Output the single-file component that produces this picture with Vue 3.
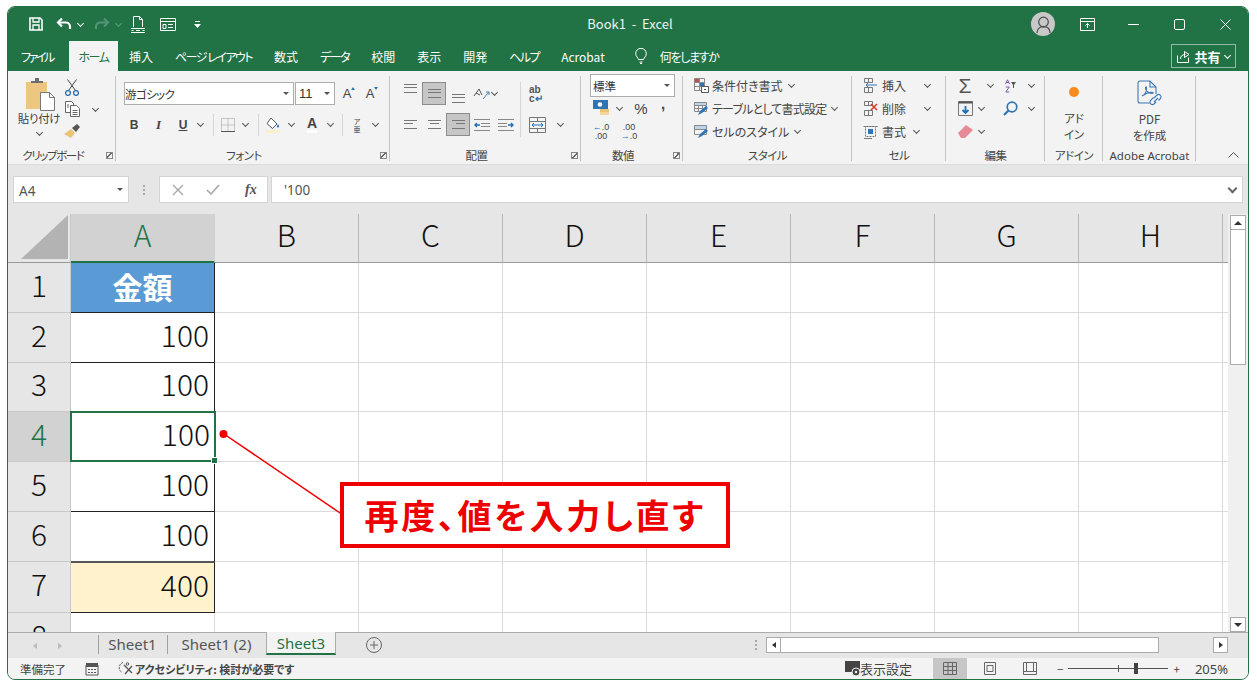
<script setup>
const menuTabs = [
  { label: "挿入" },
  { label: "ページ レイアウト", kana: true },
  { label: "数式" },
  { label: "データ", kana: true },
  { label: "校閲" },
  { label: "表示" },
  { label: "開発" },
  { label: "ヘルプ", kana: true },
  { label: "Acrobat" },
];
const columns = ["A", "B", "C", "D", "E", "F", "G", "H"];
const rows = [
  { no: 1, value: "金額", kind: "head" },
  { no: 2, value: "100", kind: "num" },
  { no: 3, value: "100", kind: "num" },
  { no: 4, value: "100", kind: "sel" },
  { no: 5, value: "100", kind: "num" },
  { no: 6, value: "100", kind: "num" },
  { no: 7, value: "400", kind: "total" },
  { no: 8, value: "", kind: "" },
];
</script>

<template>
  <div class="page">
    <div class="window">
      <!-- title bar -->
      <div class="titlebar">
        <div class="qat">
          <svg class="q-save" width="14" height="14" viewBox="0 0 14 14" fill="none" stroke="#fff" stroke-width="1.6"><path d="M1 1h10l2 2v10H1z" /><path d="M4 1v4h6V1M4 13V8h6v5" stroke-width="1.3" /></svg>
          <svg class="q-undo" width="17" height="14" viewBox="0 0 17 14" fill="none" stroke="#fff" stroke-width="2.2"><path d="M6 1.5 2 5.5l4 4" /><path d="M2.5 5.5H10a4 4 0 0 1 4 4V12" /></svg>
          <i class="chev white q-c1"></i>
          <svg class="q-redo" width="17" height="14" viewBox="0 0 17 14" fill="none" stroke="#55957a" stroke-width="2"><path d="m11 1.5 4 4-4 4" /><path d="M14.5 5.5H7a4 4 0 0 0-4 4V12" /></svg>
          <i class="chev faded q-c2"></i>
          <svg class="q-new" width="14" height="17" viewBox="0 0 14 17" fill="none" stroke="#fff"><path d="M2.5 11V.5h6l3 3V11M8.500.5v3h3" /><path d="M.5 14.5h2M5 14.5h4M11.5 14.5h2M0 12.5h14M0 16.5h14" stroke-width="1" /></svg>
          <svg class="q-form" width="16" height="13" viewBox="0 0 16 13" fill="none" stroke="#fff"><path d="M.5.5h15v12H.5zM.5 3.5h15M3 6.5h3v4H3zM8 6.5h5M8 9.5h5" /></svg>
          <svg class="q-more" width="7" height="7" viewBox="0 0 7 7" fill="#fff"><path d="M1 0h5v1H1zM0 3h7L3.5 7z" /></svg>
        </div>
        <div class="doc-title">Book1 &nbsp;-&nbsp; Excel</div>
        <div class="win-btns">
          <span class="avatar">
            <svg width="15" height="18" viewBox="0 0 15 18" fill="none" stroke="#4a4a4a" stroke-width="1.2"><circle cx="7.5" cy="6" r="4.8" /><path d="M1 17c0-4 2.5-6.3 6.5-6.3S14 13 14 17" /></svg>
          </span>
          <svg class="w-disp" width="15" height="13" viewBox="0 0 15 13" fill="none" stroke="#fff"><path d="M.5.5h14v12H.5zM.5 3.5h14" /><path d="M7.5 10V5.5M5.5 7.5l2-2 2 2" /></svg>
          <svg class="w-min" width="11" height="1" viewBox="0 0 11 1"><path d="M0 0h11v1H0z" fill="#fff" /></svg>
          <svg class="w-max" width="11" height="11" viewBox="0 0 11 11" fill="none" stroke="#fff"><rect x=".5" y=".5" width="10" height="10" rx="1.5" /></svg>
          <svg class="w-close" width="11" height="11" viewBox="0 0 11 11" fill="none" stroke="#fff"><path d="m.5.5 10 10M10.5.5l-10 10" /></svg>
        </div>
      </div>

      <!-- menu tabs -->
      <div class="menubar">
        <span class="menu-item file">ファイル</span>
        <span class="menu-item active kana">ホーム</span>
        <span
          v-for="t in menuTabs"
          :key="t.label"
          class="menu-item"
          :class="{ kana: t.kana }"
        >{{ t.label }}</span>
        <svg class="bulb" width="12" height="16" viewBox="0 0 12 16" fill="none" stroke="#fff"><path d="M3.5 11.5C3 9.5.7 8.5.7 5.6a5.3 5.3 0 0 1 10.6 0c0 2.9-2.3 3.9-2.8 5.9zM4.5 14h3M5 15.5h2" /></svg>
        <span class="tell">何をしますか</span>
        <span class="share">
          <svg width="13" height="13" viewBox="0 0 13 13" fill="none" stroke="#fff"><path d="M.5 5.5v7h11v-5M3.5 9c0-3 2-4.500 5-4.500M7.5 1.5l4.500 3-4.500 3z" /></svg>
          <b>共有</b><i class="chev white"></i>
        </span>
      </div>

      <!-- ribbon -->
      <div class="ribbon">
        <div class="group g-clip">
          <div class="group-body clip-body">
            <div class="paste">
              <svg class="paste-icon" width="30" height="33" viewBox="0 0 30 33"><rect x="0" y="4" width="21" height="27" fill="#edc77f" /><path d="M5 5V3h4V0h4v3h4v2z" fill="#6e6e6e" /><path d="M14.5 14.5h9l5 5v13h-14z" fill="#fff" stroke="#777" /><path d="M23.5 14.5v5h5" fill="none" stroke="#777" /></svg>
              <span class="paste-label">貼り付け</span>
              <i class="chev"></i>
            </div>
            <div class="clip-tools">
              <svg width="14" height="17" viewBox="0 0 14 17" fill="none" stroke="#444"><path d="m2.5.5 8 11M11.5.5l-8 11" /><circle cx="3" cy="14" r="2.4" stroke="#2b6cb0" stroke-width="1.3" /><circle cx="11" cy="14" r="2.4" stroke="#2b6cb0" stroke-width="1.3" /></svg>
              <span></span>
              <svg width="15" height="16" viewBox="0 0 15 16" fill="#fff" stroke="#666"><path d="M.5.5h6l2 2v9h-8z" /><path d="M5.5 4.5h6l3 3v8h-9z" /><path d="M7.5 9.5h5M7.5 11.5h5M7.5 13.5h5M2 4h2M2 6h2" fill="none" /></svg>
              <i class="chev"></i>
              <svg width="16" height="14" viewBox="0 0 16 14"><path d="M0 10 7 5l4 4-4 5z" fill="#e9c477" /><path d="m8 4 5-4 3 3-4 5z" fill="#555" /></svg>
            </div>
          </div>
          <div class="group-label shift tight">クリップボード</div>
          <i class="launcher"></i>
        </div>

        <div class="group g-font">
          <div class="group-body font-body">
            <div class="font-row1">
              <div class="select font-name">游ゴシック<i class="tri"></i></div>
              <div class="select font-size">11<i class="tri"></i></div>
              <span class="grow">A<i class="up"></i></span>
              <span class="shrink">A<i class="down"></i></span>
            </div>
            <div class="font-row2">
              <b class="fmt sans">B</b>
              <b class="fmt italic">I</b>
              <b class="fmt underline sans">U</b>
              <i class="chev"></i>
              <i class="vbar"></i>
              <svg width="14" height="14" viewBox="0 0 14 14" fill="none" stroke="#9a9a9a"><path d="M.5.5h13v13H.5zM7 .5v13M.5 7h13" stroke-dasharray="1 1" /><path d="M0 13.5h14" stroke="#555" /></svg>
              <i class="chev"></i>
              <i class="vbar"></i>
              <svg width="17" height="17" viewBox="0 0 17 17"><path d="m6 2 6 6-4.5 4.5L2 7.5z" fill="#fff" stroke="#555" /><path d="M13 8c1.5 2 1.5 3.5 0 3.5S11.5 10 13 8z" fill="#2f7ec1" /><path d="M1 14h14v3H1z" fill="#fbeecb" /></svg>
              <i class="chev"></i>
              <span class="font-color">A</span>
              <i class="chev"></i>
              <i class="vbar"></i>
              <span class="ruby">ア<br />亜</span>
              <i class="chev"></i>
            </div>
          </div>
          <div class="group-label shift">フォント</div>
          <i class="launcher"></i>
        </div>

        <div class="group g-align">
          <div class="group-body align-body">
            <div class="align-grid">
              <span class="al"><i class="lines top"></i></span>
              <span class="al on"><i class="lines"></i></span>
              <span class="al"><i class="lines bottom"></i></span>
              <span class="al orient">
                <svg width="18" height="15" viewBox="0 0 18 15" fill="none" stroke="#555"><path d="m1 10 5-7 3 6M3 7l4 2" /><path d="M10 13 16 6M13 6h3v3" stroke="#4a7ebb" /></svg>
                <i class="chev abs-chev"></i>
              </span>
              <span class="al"></span>
              <span class="al"><i class="lines left"></i></span>
              <span class="al"><i class="lines center"></i></span>
              <span class="al on"><i class="lines right"></i></span>
              <span class="al">
                <svg width="16" height="12" viewBox="0 0 16 12" fill="none" stroke="#888"><path d="M0 .5h16M7 4.5h9M7 7.5h9M0 11.5h16" /><path d="M6 6H1M3 4 1 6l2 2" stroke="#1e6fb8" stroke-width="1.4" /></svg>
              </span>
              <span class="al">
                <svg width="16" height="12" viewBox="0 0 16 12" fill="none" stroke="#888"><path d="M0 .5h16M0 4.5h9M0 7.5h9M0 11.5h16" /><path d="M10 6h5M13 4l2 2-2 2" stroke="#1e6fb8" stroke-width="1.4" /></svg>
              </span>
            </div>
            <i class="vbar tall"></i>
            <div class="wrap-col">
              <div class="wrap-row">
                <span class="wrap-icon">ab<br />c<em>↵</em></span>
              </div>
              <div class="wrap-row">
                <svg width="17" height="16" viewBox="0 0 17 16" fill="none" stroke="#777"><path d="M.5.5h16v15H.5zM.5 4.5h16M.5 11.5h16M8.5.5v4M8.5 11.5v4" /><path d="M3 8h11M5 6 3 8l2 2M12 6l2 2-2 2" stroke="#1e6fb8" /></svg>
                <i class="chev merge-chev"></i>
              </div>
            </div>
          </div>
          <div class="group-label shift">配置</div>
          <i class="launcher"></i>
        </div>

        <div class="group g-num">
          <div class="group-body num-body">
            <div class="select num-format">標準<i class="tri"></i></div>
            <div class="num-row2">
              <svg width="17" height="17" viewBox="0 0 17 17"><rect x="0" y="0" width="15" height="9" fill="#2f75b5" /><circle cx="7" cy="4.5" r="2.3" fill="#fff" /><rect x="7" y="9" width="9" height="3" fill="#e9c477" /><rect x="7" y="12" width="9" height="3" fill="#f2d59b" /></svg>
              <i class="chev"></i>
              <span class="pct">%</span>
              <span class="comma">,</span>
            </div>
            <div class="num-row3">
              <span class="dec"><em>←</em>.0<br />.00</span>
              <span class="dec">.00<br /><em>→</em>.0</span>
            </div>
          </div>
          <div class="group-label shift">数値</div>
          <i class="launcher"></i>
        </div>

        <div class="group g-style">
          <div class="group-body list-body">
            <div class="list-row">
              <svg width="15" height="15" viewBox="0 0 15 15" fill="none" stroke="#8a8a8a"><path d="M.5.5h10v12H.5zM.5 4.5h10M.5 8.5h10M5.5.5v12" /><path d="M1 1h4v3H1z" fill="#c0504d" stroke="none" /><path d="M6 5h4v3H6z" fill="#2f75b5" stroke="none" /><path d="M7.5 8.5h7v6h-7z" fill="#fff" stroke="#555" /><path d="M10 11.5h2" stroke="#555" /></svg>
              <span>条件付き書式</span><i class="chev"></i>
            </div>
            <div class="list-row">
              <svg width="15" height="15" viewBox="0 0 15 15" fill="none" stroke="#8a8a8a"><path d="M.5 1.5h12v9H.5zM.5 4.5h12M.5 7.5h12M4.5 1.5v9M8.5 1.5v9" /><path d="M.5 1.5h12v3H.5z" fill="#bcd3ea" /><path d="m4 14 2-4 6-5 2 2-6 5z" fill="#2f75b5" stroke="none" /></svg>
              <span class="table-label">テーブルとして書式設定</span><i class="chev"></i>
            </div>
            <div class="list-row">
              <svg width="15" height="15" viewBox="0 0 15 15" fill="none" stroke="#8a8a8a"><path d="M.5 1.5h12v9H.5z" /><path d="M.5 1.5h12v4H.5z" fill="#bcd3ea" /><path d="m4 14 2-4 6-5 2 2-6 5z" fill="#2f75b5" stroke="none" /></svg>
              <span>セルのスタイル</span><i class="chev"></i>
            </div>
          </div>
          <div class="group-label">スタイル</div>
        </div>

        <div class="group g-cell">
          <div class="group-body list-body">
            <div class="list-row">
              <svg width="15" height="15" viewBox="0 0 15 15" fill="none" stroke="#777"><path d="M1.5.5h8v4h-8zM1.5 9.5h8v5h-8zM5.5.5v4M5.5 9.5v5" /><path d="M14 7H3M5 5 3 7l2 2" stroke="#2f75b5" /></svg>
              <span class="cell-text">挿入</span><i class="chev"></i>
            </div>
            <div class="list-row">
              <svg width="15" height="15" viewBox="0 0 15 15" fill="none" stroke="#777"><path d="M1.5.5h8v4h-8zM1.5 9.5h8v5h-8zM5.5.5v4M5.5 9.5v5" /><path d="m8 3 6 6M14 3 8 9" stroke="#d83b30" stroke-width="1.6" /></svg>
              <span class="cell-text">削除</span><i class="chev"></i>
            </div>
            <div class="list-row">
              <svg width="15" height="15" viewBox="0 0 15 15" fill="none" stroke="#777"><path d="M.5 2.5h14M2.5 2.5h10v10h-10z" stroke-dasharray="2 1" /><path d="M5 5h5v5H5z" fill="#2f75b5" stroke="none" /><path d="M1 14.5h8" /></svg>
              <span class="cell-text">書式</span><i class="chev near"></i>
            </div>
          </div>
          <div class="group-label">セル</div>
        </div>

        <div class="group g-edit">
          <div class="group-body edit-body">
            <span class="sigma">Σ</span><i class="chev"></i>
            <svg width="11" height="14" viewBox="0 0 11 14" fill="none" stroke="#7a5ca8"><path d="M.5 5 2.5.8 4.5 5M1 3.5h3M.8 8h3.5L.8 13h3.5" /><path d="M6 3h5L9 6v3H8V6z" fill="#555" stroke="none" /></svg>
            <i class="chev"></i>
            <svg width="15" height="15" viewBox="0 0 15 15" fill="none" stroke="#777"><path d="M.5.5h14v14H.5z" /><path d="M.5.5h14v2H.5z" fill="#555" stroke="none" /><path d="M7.5 5v7M4.5 9l3 3 3-3" stroke="#1e6fb8" stroke-width="1.8" /></svg>
            <i class="chev c-near"></i>
            <svg width="15" height="15" viewBox="0 0 15 15" fill="none" stroke="#2f75b5" stroke-width="1.7"><circle cx="9" cy="6" r="4.8" /><path d="M5.5 9.5 1 14" stroke-width="2.2" /></svg>
            <i class="chev"></i>
            <svg width="15" height="13" viewBox="0 0 15 13"><path d="m0 8 8-8 7 5-8 8H3z" fill="#e58a96" /></svg>
            <i class="chev c-near"></i>
          </div>
          <div class="group-label">編集</div>
        </div>

        <div class="group g-addin">
          <div class="group-body big-body">
            <i class="orange-dot"></i>
            <span class="big-label">アド<br />イン</span>
          </div>
          <div class="group-label">アドイン</div>
        </div>

        <div class="group g-acro">
          <div class="group-body big-body">
            <svg class="pdf" width="26" height="27" viewBox="0 0 26 27" fill="none" stroke="#3e77b8" stroke-width="1.1"><path d="M13 23H3a2 2 0 0 1-2-2V3a2 2 0 0 1 2-2h10l6 6v7" /><path d="M13 1v6h6" /><path d="M5 16c3-1 5-5 4.5-8.5-.2-1-1.3-.8-1 .8.5 2.5 3.5 5.5 7 5 1-.2.8-1-.5-1-3 0-7 1.5-10 3.7z" /><path d="m17 18 3-3a2.5 2.5 0 0 1 3.5 3.5l-2 2M19 22l-2 2a2.5 2.5 0 0 1-3.5-3.5l3-3M17 22l4-4" /></svg>
            <span class="big-label pdf-label">PDF<br />を作成</span>
          </div>
          <div class="group-label acro-label">Adobe Acrobat</div>
        </div>

        <svg class="collapse" width="11" height="6" viewBox="0 0 11 6" fill="none" stroke="#555"><path d="m.5 5.5 5-5 5 5" /></svg>
      </div>

      <!-- formula bar -->
      <div class="formula">
        <div class="name-box">A4<i class="tri"></i></div>
        <div class="dots"><i></i><i></i><i></i></div>
        <div class="fx-box">
          <svg width="12" height="12" viewBox="0 0 12 12" fill="none" stroke="#a5a5a5" stroke-width="1.3"><path d="m1 1 10 10M11 1 1 11" /></svg>
          <svg width="14" height="11" viewBox="0 0 14 11" fill="none" stroke="#a5a5a5" stroke-width="1.5"><path d="m1 6 4 4 8-9" /></svg>
          <span class="fx">fx</span>
        </div>
        <div class="formula-input">'100<i class="chev big"></i></div>
      </div>

      <!-- sheet -->
      <div class="sheet">
        <div class="grid">
          <div class="corner">
            <svg width="47" height="44" viewBox="0 0 47 44"><path d="M47 0v44H0z" fill="#b3b3b3" /></svg>
          </div>
          <div
            v-for="c in columns"
            :key="c"
            class="col-head"
            :class="{ current: c === 'A' }"
          >{{ c }}</div>
          <div class="col-rest"></div>

          <template v-for="r in rows" :key="r.no">
            <div class="row-head" :class="{ current: r.no === 4 }">{{ r.no }}</div>
            <div class="cell cell-a" :class="r.kind">
              {{ r.value }}
              <i v-if="r.kind === 'sel'" class="handle"></i>
            </div>
            <div v-for="c in columns.slice(1)" :key="c" class="cell"></div>
            <div class="cell rest"></div>
          </template>
        </div>
        <div class="vscroll">
          <div class="sb-btn"><i class="tri-up"></i></div>
          <div class="v-thumb"></div>
          <div class="v-track"></div>
          <div class="sb-btn"><i class="tri-down"></i></div>
        </div>
      </div>

      <!-- sheet tabs -->
      <div class="tabbar">
        <div class="nav">
          <i class="nav-l"></i>
          <i class="nav-r"></i>
        </div>
        <div class="sheet-tab first">Sheet1</div>
        <div class="sheet-tab second">Sheet1 (2)</div>
        <div class="sheet-tab active">Sheet3</div>
        <svg class="add" width="16" height="16" viewBox="0 0 16 16" fill="none" stroke="#666"><circle cx="8" cy="8" r="7.5" /><path d="M8 4v8M4 8h8" /></svg>
        <div class="dots small"><i></i><i></i><i></i></div>
        <div class="hscroll">
          <div class="sb-btn wide"><i class="tri-left"></i></div>
          <div class="h-thumb"></div>
          <div class="sb-btn wide"><i class="tri-right"></i></div>
        </div>
      </div>

      <!-- status bar -->
      <div class="status">
        <span class="ready">準備完了</span>
        <svg class="st-macro" width="14" height="14" viewBox="0 0 14 14" fill="#555"><path d="M1 3h12v10H1z" fill="none" stroke="#555" /><path d="M1 1h12v4H1zM3 7h2v1H3zM6 7h2v1H6zM9 7h2v1H9zM3 10h2v1H3zM6 10h2v1H6zM9 10h2v1H9z" /></svg>
        <svg class="st-access" width="15" height="15" viewBox="0 0 15 15" fill="none" stroke="#555"><path d="M5 1.5a5.5 5.5 0 0 0-1 10" stroke-dasharray="2 1" /><path d="m6 4 8 8M14 5 7 13" stroke-width="1.3" /><circle cx="9.5" cy="3" r="1.3" /></svg>
        <b class="access">アクセシビリティ: 検討が必要です</b>
        <span class="st-right">
          <svg class="st-view" width="16" height="15" viewBox="0 0 16 15"><path d="M0 0h15v11H0z" fill="#444" /><circle cx="11" cy="11" r="4" fill="#444" stroke="#f3f3f3" /><circle cx="11" cy="11" r="1.2" fill="#f3f3f3" /></svg>
          <span class="view-label">表示設定</span>
          <span class="view on">
            <svg width="14" height="13" viewBox="0 0 14 13" fill="none" stroke="#666"><path d="M.5.5h13v12H.5zM.5 4.5h13M.5 8.5h13M5 .5v12M9.5.5v12" /></svg>
          </span>
          <span class="view">
            <svg width="12" height="13" viewBox="0 0 12 13" fill="none" stroke="#666"><path d="M.5.5h11v12H.5zM3 3.5h6v6H3z" /></svg>
          </span>
          <span class="view">
            <svg width="14" height="13" viewBox="0 0 14 13" fill="none" stroke="#666"><path d="M.5.5h13v12H.5zM.5 9.5h3M10.5 9.5h3M3.5.5v9h7V.5" /></svg>
          </span>
          <span class="zoom-minus">−</span>
          <span class="slider"><i class="tick"></i><i class="thumb"></i></span>
          <span class="zoom-plus">+</span>
          <span class="zoom-val">205%</span>
        </span>
      </div>
    </div>

    <!-- annotation on top of the sheet -->
    <svg class="arrow" width="1257" height="688" viewBox="0 0 1257 688">
      <circle cx="223.5" cy="434" r="4" fill="#ee0000" />
      <path d="M224 434 343 515" stroke="#ee0000" stroke-width="1.5" fill="none" />
    </svg>
    <div class="callout">再度、値を入力し直す</div>
  </div>
</template>

<style>
html,
body {
  margin: 0;
  background: #fff;
}
</style>

<style scoped>
.page {
  position: relative;
  width: 1257px;
  height: 688px;
  overflow: hidden;
  background: #fff;
  padding: 6px 0 0 7px;
  box-sizing: border-box;
  font-family: "Noto Sans CJK JP", "Noto Sans", sans-serif;
  font-feature-settings: "palt";
  color: #444;
}

i {
  font-style: normal;
}

.window {
  width: 1242px;
  height: 674px;
  box-sizing: border-box;
  border: 1px solid #217346;
  border-radius: 8px;
  overflow: hidden;
  display: flex;
  flex-direction: column;
  background: #e6e6e6;
}

.chev {
  display: inline-block;
  flex: none;
  width: 4px;
  height: 4px;
  border-right: 1px solid #555;
  border-bottom: 1px solid #555;
  transform: translateY(-1px) rotate(45deg);
}

.chev.white {
  border-color: #fff;
}

.chev.faded {
  border-color: #5c9a7f;
}

.chev.big {
  width: 5px;
  height: 5px;
  border-width: 0 2px 2px 0;
  border-color: #666;
}

.tri {
  width: 0;
  height: 0;
  border-left: 3px solid transparent;
  border-right: 3px solid transparent;
  border-top: 3px solid #555;
}

/* title bar */
.titlebar {
  height: 34px;
  flex: none;
  background: #217346;
  display: flex;
  align-items: center;
  color: #fff;
}

.qat,
.win-btns {
  flex: 1;
  display: flex;
  align-items: center;
}

.qat {
  padding-left: 21px;
}

.q-undo {
  margin-left: 13px;
}

.q-c1 {
  margin-left: 5px;
}

.q-redo {
  margin-left: 10px;
}

.q-c2 {
  margin-left: 6px;
}

.q-new {
  margin-left: 10px;
}

.q-form {
  margin-left: 15px;
}

.q-more {
  margin-left: 18px;
}

.doc-title {
  font-size: 13px;
  line-height: 17px;
  padding-bottom: 2px;
  color: #f0f5f2;
}

.win-btns {
  justify-content: flex-end;
  padding-right: 17px;
}

.avatar {
  width: 24px;
  height: 24px;
  border-radius: 50%;
  background: #c8c8c8;
  display: flex;
  align-items: flex-end;
  justify-content: center;
  overflow: hidden;
  padding-bottom: 2px;
  box-sizing: border-box;
}

.w-disp {
  margin-left: 25px;
}

.w-min {
  margin-left: 33px;
}

.w-max {
  margin-left: 35px;
}

.w-close {
  margin-left: 35px;
}

/* menu row */
.menubar {
  height: 30px;
  flex: none;
  background: #217346;
  display: flex;
  align-items: center;
  padding-left: 13px;
  color: #fff;
  font-size: 12px;
  position: relative;
}

.menu-item {
  margin-right: 22px;
  white-space: nowrap;
}

.kana {
  letter-spacing: -1.5px;
}

.menu-item.file {
  margin-right: 16px;
  letter-spacing: -2.4px;
}

.menu-item.active {
  background: #f3f3f3;
  color: #217346;
  height: 30px;
  width: 49px;
  line-height: 32px;
  text-align: center;
  margin-right: 11px;
}

.bulb {
  margin-left: 8px;
}

.tell {
  margin-left: 13px;
  letter-spacing: -1.3px;
}

.share {
  margin-left: auto;
  margin-right: 12px;
  width: 65px;
  height: 24px;
  box-sizing: border-box;
  border: 1px solid #8fbca6;
  display: flex;
  align-items: center;
  justify-content: center;
  gap: 4px;
  font-size: 13px;
}

/* ribbon */
.ribbon {
  height: 94px;
  flex: none;
  background: #f3f3f3;
  display: flex;
  position: relative;
  box-sizing: border-box;
  border-bottom: 1px solid #dcdcdc;
  font-size: 11.5px;
  color: #444;
}

.group {
  position: relative;
  flex: none;
  display: flex;
  flex-direction: column;
  box-sizing: border-box;
}

.group::after {
  content: "";
  position: absolute;
  right: 0;
  top: 5px;
  bottom: 3px;
  width: 1px;
  background: #c4c4c4;
}

.group-body {
  height: 76px;
  flex: none;
}

.group-label {
  text-align: center;
  line-height: 17px;
  font-size: 11.5px;
  letter-spacing: -.5px;
  white-space: nowrap;
}

.group-label.tight {
  letter-spacing: -1.4px;
}

.group-label.acro-label {
  letter-spacing: 0;
  font-family: "Noto Sans", sans-serif;
}

.group-label.shift {
  padding-right: 18px;
}

.launcher {
  position: absolute;
  right: 3px;
  bottom: 5px;
  width: 7px;
  height: 7px;
  border: 1px solid #888;
  box-sizing: border-box;
  background: linear-gradient(135deg, transparent 40%, #666 40%, #666 60%, transparent 60%);
}

.g-clip {
  width: 108px;
}

.g-font {
  width: 274px;
}

.g-align {
  width: 191px;
}

.g-num {
  width: 102px;
}

.g-style {
  width: 169px;
}

.g-cell {
  width: 94px;
}

.g-edit {
  width: 99px;
}

.g-addin {
  width: 58px;
}

.g-acro {
  width: 93px;
}

.collapse {
  position: absolute;
  right: 9px;
  bottom: 6px;
}

.clip-body {
  display: flex;
  padding: 7px 0 0 5px;
  box-sizing: border-box;
}

.paste {
  width: 52px;
  display: flex;
  flex-direction: column;
  align-items: center;
}

.paste-icon {
  margin-left: 4px;
}

.paste-label {
  font-size: 11.5px;
  line-height: 16px;
  margin-top: -1px;
  white-space: nowrap;
  letter-spacing: -.3px;
}

.paste .chev {
  margin-top: 5px;
}

.clip-tools {
  display: grid;
  grid-template-columns: 22px 24px;
  grid-template-rows: repeat(3, 22px);
  place-items: center;
  margin: -2px 0 0 -4px;
  height: 66px;
}

.clip-tools svg:last-child {
  grid-column: 1;
}

.font-body {
  padding: 11px 0 0 8px;
  box-sizing: border-box;
}

.font-row1 {
  display: flex;
  align-items: center;
  height: 23px;
}

.select {
  height: 23px;
  box-sizing: border-box;
  background: #fff;
  border: 1px solid #adadad;
  display: flex;
  align-items: center;
  justify-content: space-between;
  padding: 0 4px 0 2px;
  font-size: 11.5px;
  color: #333;
}

.font-name {
  width: 170px;
  padding-left: 0;
  letter-spacing: -.6px;
}

.font-size {
  width: 40px;
  margin-left: 1px;
  padding-left: 3px;
  font-size: 13px;
  font-family: "Liberation Sans", sans-serif;
}

.grow,
.shrink {
  position: relative;
  font-family: "Liberation Sans", sans-serif;
  font-size: 13px;
  width: 14px;
  text-align: center;
}

.grow {
  margin-left: 5px;
}

.shrink {
  margin-left: 9px;
}

.up,
.down {
  position: absolute;
  right: -1px;
  top: 1px;
  width: 0;
  height: 0;
  border-left: 2px solid transparent;
  border-right: 2px solid transparent;
}

.up {
  border-bottom: 3px solid #2f75b5;
}

.down {
  border-top: 3px solid #2f75b5;
}

.font-row2 {
  display: grid;
  grid-template-columns: 24px 25px 24px 10px 16px 14px 20px 6px 24px 12px 30px 6px 18px 12px 24px;
  align-items: center;
  justify-items: center;
  height: 23px;
  margin-top: 8px;
  margin-left: -2px;
}

.fmt {
  font-size: 12px;
}

.sans {
  font-family: "Liberation Sans", sans-serif;
}

.italic {
  font-family: "Liberation Serif", serif;
  font-style: italic;
  font-size: 13px;
}

.underline {
  text-decoration: underline;
}

.vbar {
  display: block;
  width: 1px;
  height: 22px;
  background: #d6d6d6;
}

.font-color {
  font-family: "Liberation Sans", sans-serif;
  font-weight: 700;
  font-size: 14px;
  line-height: 14px;
  border-bottom: 3px solid #fff;
}

.ruby {
  font-size: 7px;
  line-height: 8px;
  text-align: center;
}

.align-body {
  display: flex;
  padding: 11px 0 0 8px;
  box-sizing: border-box;
}

.align-grid {
  display: grid;
  grid-template-columns: repeat(5, 24px);
  grid-template-rows: 23px 23px;
  row-gap: 8px;
  width: 120px;
}

.al {
  position: relative;
  display: flex;
  align-items: center;
  justify-content: center;
}

.al.on {
  background: #c6c6c6;
  border: 1px solid #8c8c8c;
  box-sizing: border-box;
}

.lines {
  display: block;
  width: 13px;
  height: 7px;
  border-top: 1px solid #777;
  border-bottom: 1px solid #777;
  position: relative;
}

.lines::after {
  content: "";
  position: absolute;
  left: 0;
  right: 0;
  top: 2px;
  height: 1px;
  background: #777;
}

.lines.top {
  transform: translateY(-5px);
}

.lines.bottom {
  transform: translateY(5px);
}

.lines.left::after {
  right: 4px;
}

.lines.right::after {
  left: 4px;
}

.lines.center::after {
  left: 2px;
  right: 2px;
}

.abs-chev {
  position: absolute;
  right: -3px;
  top: 9px;
}

.vbar.tall {
  height: 55px;
  margin: 0 1px 0 2px;
}

.wrap-col {
  width: 44px;
  display: flex;
  flex-direction: column;
  gap: 8px;
}

.wrap-row {
  height: 23px;
  display: flex;
  align-items: center;
  padding-left: 7px;
  box-sizing: border-box;
}

.wrap-icon {
  font-family: "Liberation Sans", sans-serif;
  font-size: 10px;
  line-height: 9px;
  font-weight: 700;
  color: #555;
}

.wrap-icon em {
  color: #1e6fb8;
  font-style: normal;
}

.merge-chev {
  margin-left: 12px;
}

.num-body {
  padding: 3px 0 0 9px;
  box-sizing: border-box;
}

.num-format {
  width: 85px;
}

.num-row2 {
  display: grid;
  grid-template-columns: 22px 14px 30px 14px;
  height: 23px;
  align-items: center;
  justify-items: center;
}

.pct {
  font-family: "Liberation Sans", sans-serif;
  font-size: 15px;
}

.comma {
  font-family: "Liberation Sans", sans-serif;
  font-weight: 700;
  font-size: 15px;
  line-height: 10px;
  padding-bottom: 9px;
}

.num-row3 {
  display: flex;
  gap: 6px;
  height: 23px;
  align-items: center;
}

.dec {
  width: 22px;
  text-align: center;
  font-family: "Liberation Sans", sans-serif;
  font-size: 9px;
  line-height: 9px;
}

.dec em {
  font-style: normal;
  color: #1e6fb8;
  font-weight: 700;
}

.list-body {
  padding: 3px 0 0 11px;
  box-sizing: border-box;
}

.list-row {
  display: flex;
  align-items: center;
  height: 23px;
  gap: 3px;
  font-size: 12px;
  white-space: nowrap;
}

.list-row .chev {
  margin-left: 3px;
}

.table-label {
  letter-spacing: -.8px;
}

.cell-text {
  width: 36px;
  margin-left: 1px;
}

.g-cell .list-row .chev {
  margin-left: 4px;
}

.g-cell .list-row .chev.near {
  margin-left: -7px;
}

.edit-body {
  display: grid;
  grid-template-columns: 38px 12px 28px 14px;
  grid-template-rows: repeat(3, 23px);
  place-items: center;
  padding: 3px 4px 0 0;
  box-sizing: border-box;
  width: 92px;
}

.c-near {
  margin-right: 18px;
}

.sigma {
  font-family: "Liberation Sans", sans-serif;
  font-size: 21px;
  line-height: 20px;
  color: #555;
}

.big-body {
  display: flex;
  flex-direction: column;
  align-items: center;
  box-sizing: border-box;
}

.orange-dot {
  width: 10px;
  height: 10px;
  border-radius: 50%;
  background: #f68a1e;
  margin-top: 16px;
}

.big-label {
  margin-top: 13px;
  font-size: 11.5px;
  line-height: 16px;
  text-align: center;
}

.pdf {
  margin-top: 9px;
}

.pdf-label {
  margin-top: 4px;
}

/* formula bar */
.formula {
  height: 49px;
  flex: none;
  background: #e6e6e6;
  display: flex;
  align-items: flex-start;
  padding: 11px 0 0 5px;
  box-sizing: border-box;
  color: #555;
  font-size: 13.5px;
}

.name-box,
.fx-box,
.formula-input {
  height: 27px;
  box-sizing: border-box;
  background: #fff;
  border: 1px solid #d4d4d4;
  display: flex;
  align-items: center;
}

.name-box {
  width: 116px;
  padding: 2px 5px 0 5px;
  justify-content: space-between;
  font-family: "Noto Sans", sans-serif;
}

.name-box .tri {
  margin-top: -2px;
}

.dots {
  width: 30px;
  height: 27px;
  display: flex;
  flex-direction: column;
  gap: 2px;
  align-items: center;
  justify-content: center;
}

.dots i {
  width: 2px;
  height: 2px;
  background: #a8a8a8;
}

.fx-box {
  width: 109px;
  padding-left: 12px;
  gap: 22px;
}

.fx {
  font-family: "Liberation Serif", serif;
  font-style: italic;
  font-weight: 700;
  font-size: 14px;
  color: #555;
  margin-left: 3px;
}

.formula-input {
  margin-left: 3px;
  width: 972px;
  padding: 0 6px 0 12px;
  justify-content: space-between;
  font-family: "Noto Sans", sans-serif;
}

/* sheet */
.sheet {
  height: 418px;
  flex: none;
  display: flex;
  background: #e6e6e6;
}

.grid {
  width: 1220px;
  height: 418px;
  overflow: hidden;
  display: grid;
  grid-template-columns: 63px repeat(8, 144px) 5px;
  grid-template-rows: 49px 50px 50px 49px 50px 50px 50px 51px 50px;
  background: #fff;
  font-family: "Noto Sans CJK JP", sans-serif;
  font-weight: 300;
  line-height: 36px;
  color: #111;
}

.corner {
  background: #e6e6e6;
  border-bottom: 1px solid #9a9a9a;
  border-right: 1px solid #c8c8c8;
  display: flex;
  align-items: flex-end;
  justify-content: flex-end;
  padding: 0 2px 3px 0;
  box-sizing: border-box;
}

.col-head {
  background: #e6e6e6;
  border-right: 1px solid #b8b8b8;
  border-bottom: 1px solid #9a9a9a;
  box-sizing: border-box;
  display: flex;
  align-items: center;
  justify-content: center;
  font-size: 30px;
  padding-bottom: 8px;
  color: #111;
}

.col-head.current {
  background: #d2d2d2;
  color: #217346;
  border-bottom: 2px solid #217346;
  border-right-color: #d2d2d2;
}

.col-rest {
  background: #e6e6e6;
  border-bottom: 1px solid #9a9a9a;
}

.row-head {
  background: #e6e6e6;
  border-right: 1px solid #c8c8c8;
  border-bottom: 1px solid #c8c8c8;
  box-sizing: border-box;
  display: flex;
  align-items: center;
  justify-content: center;
  font-size: 30px;
  padding-bottom: 8px;
}

.row-head.current {
  background: #d2d2d2;
  color: #217346;
}

.cell {
  box-sizing: border-box;
  border-right: 1px solid #dadada;
  border-bottom: 1px solid #dadada;
  position: relative;
}

.cell.rest {
  border-right: 0;
}

.cell-a {
  border-right: 1px solid #222;
  border-bottom: 1px solid #222;
  display: flex;
  align-items: center;
  justify-content: flex-end;
  padding: 0 5px 8px 0;
  font-size: 30px;
  white-space: nowrap;
}

.cell-a.head {
  background: #5b9bd5;
  color: #fff;
  font-weight: 700;
  justify-content: center;
  padding: 0 0 4px 0;
}

.cell-a.sel {
  border: 2px solid #217346;
  margin: -1px -1px 0 -1px;
  padding-right: 4px;
}

.handle {
  position: absolute;
  right: -4px;
  bottom: -4px;
  width: 5px;
  height: 5px;
  background: #217346;
  border: 1px solid #fff;
  z-index: 1;
}

.cell-a.total {
  background: #fff2cc;
  border-top: 2px solid #555;
  margin-top: -1px;
}

/* last row stays plain */
.cell-a:not(.head):not(.num):not(.sel):not(.total) {
  border-right-color: #dadada;
  border-bottom-color: #dadada;
}

.vscroll {
  width: 20px;
  height: 418px;
  box-sizing: border-box;
  padding: 1px 2px 0 2px;
  display: flex;
  flex-direction: column;
  background: #f0f0f0;
}

.sb-btn {
  width: 16px;
  height: 15px;
  flex: none;
  box-sizing: border-box;
  background: #fff;
  border: 1px solid #ababab;
  display: flex;
  align-items: center;
  justify-content: center;
}

.v-thumb {
  height: 135px;
  flex: none;
  box-sizing: border-box;
  background: #fff;
  border: 1px solid #ababab;
  border-top: 0;
}

.v-track {
  flex: 1;
}

.tri-up,
.tri-down,
.tri-left,
.tri-right {
  width: 0;
  height: 0;
  border: 3px solid transparent;
}

.tri-up {
  border-bottom: 4px solid #333;
  border-top: 0;
  border-left-width: 4px;
  border-right-width: 4px;
}

.tri-down {
  border-top: 4px solid #333;
  border-bottom: 0;
  border-left-width: 4px;
  border-right-width: 4px;
}

.tri-left {
  border-right: 4px solid #333;
  border-left: 0;
}

.tri-right {
  border-left: 4px solid #333;
  border-right: 0;
}

/* sheet tabs */
.tabbar {
  height: 26px;
  flex: none;
  box-sizing: border-box;
  border-top: 1px solid #ababab;
  background: #e6e6e6;
  display: flex;
  align-items: stretch;
  font-family: "Noto Sans", "Liberation Sans", sans-serif;
  font-size: 15px;
  color: #555;
}

.nav {
  width: 90px;
  flex: none;
  display: flex;
  align-items: center;
  padding-left: 25px;
  gap: 21px;
  box-sizing: border-box;
}

.nav-l,
.nav-r {
  width: 0;
  height: 0;
  border: 3px solid transparent;
}

.nav-l {
  border-right: 4px solid #bbb;
  border-left: 0;
}

.nav-r {
  border-left: 4px solid #bbb;
  border-right: 0;
}

.sheet-tab {
  flex: none;
  display: flex;
  align-items: center;
  justify-content: center;
  box-sizing: border-box;
  padding-bottom: 3px;
}

.sheet-tab.first,
.sheet-tab.second {
  position: relative;
}

.sheet-tab.first::before,
.sheet-tab.second::before {
  content: "";
  position: absolute;
  left: 0;
  top: 2px;
  bottom: 4px;
  width: 1px;
  background: #a0a0a0;
}

.sheet-tab.first {
  width: 69px;
}

.sheet-tab.second {
  width: 99px;
}

.sheet-tab.active {
  width: 70px;
  background: #f3f3f3;
  color: #217346;
  border-bottom: 2px solid #217346;
  height: 23px;
  margin-top: -1px;
  padding-bottom: 0;
  border-left: 1px solid #ababab;
  border-right: 1px solid #ababab;
}

.add {
  margin: 4px 0 0 30px;
  flex: none;
}

.dots.small {
  width: 10px;
  height: 24px;
  margin-left: auto;
}

.hscroll {
  width: 462px;
  height: 16px;
  flex: none;
  margin: 4px 20px 0 5px;
  display: flex;
  justify-content: space-between;
  position: relative;
}

.sb-btn.wide {
  width: 15px;
  height: 16px;
}

.h-thumb {
  position: absolute;
  left: 15px;
  width: 378px;
  height: 16px;
  background: #fff;
  box-sizing: border-box;
  border: 1px solid #ababab;
  border-left: 0;
}

/* status bar */
.status {
  height: 21px;
  flex: none;
  background: #f3f3f3;
  display: flex;
  align-items: center;
  font-size: 11.5px;
  color: #444;
  padding-left: 12px;
}

.st-macro {
  margin-left: 19px;
}

.st-access {
  margin-left: 19px;
}

.access {
  margin-left: 2px;
  font-size: 11px;
  font-weight: 700;
}

.st-right {
  margin-left: auto;
  display: flex;
  align-items: center;
  height: 100%;
  padding-right: 20px;
}

.view-label {
  margin: 0 21px 0 -1px;
  font-size: 13px;
}

.view {
  width: 34px;
  height: 100%;
  margin-right: 6px;
  display: flex;
  align-items: center;
  justify-content: center;
}

.view.on {
  background: #c6c6c6;
}

.zoom-minus {
  margin-left: 4px;
}

.slider {
  width: 100px;
  height: 1px;
  background: #555;
  margin: 0 5px;
  position: relative;
}

.tick {
  position: absolute;
  left: 50px;
  top: -3px;
  width: 1px;
  height: 7px;
  background: #555;
}

.thumb {
  position: absolute;
  left: 66px;
  top: -5px;
  width: 4px;
  height: 11px;
  background: #444;
}

.zoom-val {
  margin-left: 15px;
  font-family: "Noto Sans", sans-serif;
  font-size: 13px;
}

/* annotation */
.arrow {
  position: absolute;
  left: 0;
  top: 0;
  pointer-events: none;
}

.callout {
  position: absolute;
  left: 340px;
  top: 482px;
  width: 390px;
  height: 66px;
  box-sizing: border-box;
  border: 4px solid #ee0000;
  background: #fff;
  color: #ee0000;
  font-weight: 700;
  font-size: 34px;
  letter-spacing: 2.7px;
  padding-bottom: 2px;
  display: flex;
  align-items: center;
  justify-content: center;
  white-space: nowrap;
}
</style>
